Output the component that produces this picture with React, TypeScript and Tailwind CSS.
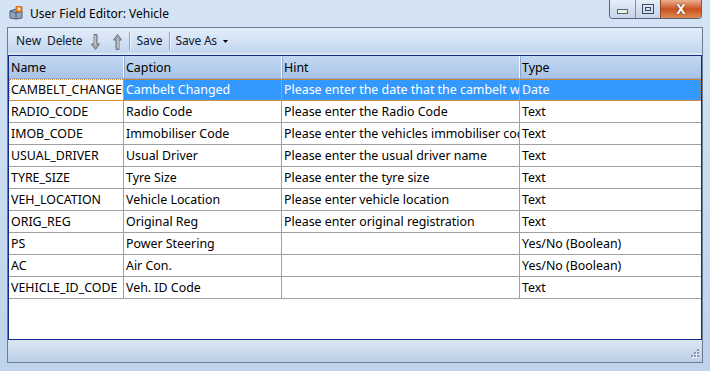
import React from "react";

type Row = { name: string; caption: string; hint: string; type: string };

const rows: Row[] = [
  { name: "CAMBELT_CHANGED", caption: "Cambelt Changed", hint: "Please enter the date that the cambelt was changed", type: "Date" },
  { name: "RADIO_CODE", caption: "Radio Code", hint: "Please enter the Radio Code", type: "Text" },
  { name: "IMOB_CODE", caption: "Immobiliser Code", hint: "Please enter the vehicles immobiliser code", type: "Text" },
  { name: "USUAL_DRIVER", caption: "Usual Driver", hint: "Please enter the usual driver name", type: "Text" },
  { name: "TYRE_SIZE", caption: "Tyre Size", hint: "Please enter the tyre size", type: "Text" },
  { name: "VEH_LOCATION", caption: "Vehicle Location", hint: "Please enter vehicle location", type: "Text" },
  { name: "ORIG_REG", caption: "Original Reg", hint: "Please enter original registration", type: "Text" },
  { name: "PS", caption: "Power Steering", hint: "", type: "Yes/No (Boolean)" },
  { name: "AC", caption: "Air Con.", hint: "", type: "Yes/No (Boolean)" },
  { name: "VEHICLE_ID_CODE", caption: "Veh. ID Code", hint: "", type: "Text" },
];

const cols = "grid grid-cols-[114px_158px_238px_1fr]";

function TitleIcon() {
  return (
    <svg width="14" height="14" viewBox="0 0 14 14">
      <path d="M1 5 L7 3 L13 5 L13 12 L7 13 L1 12 Z" fill="#8fa4bd" stroke="#4d5e74" strokeWidth="1" />
      <path d="M1 5 L7 7 L13 5" fill="none" stroke="#4d5e74" strokeWidth="1" />
      <path d="M7 7 L7 13" stroke="#4d5e74" strokeWidth="1" />
      <rect x="7" y="0" width="6" height="6" rx="1" fill="#f08a24" stroke="#b55a10" strokeWidth="0.8" />
      <path d="M10 1.5 V4.5 M8.5 3 H11.5" stroke="#fff" strokeWidth="1.2" />
    </svg>
  );
}

function Arrow({ up }: { up?: boolean }) {
  return (
    <svg width="9" height="16" viewBox="0 0 9 16" className={up ? "rotate-180" : ""}>
      <path d="M3 0.5 H6 V10 H8.5 L4.5 15.5 L0.5 10 H3 Z" fill="#a3a6a8" stroke="#6e7275" strokeWidth="1" />
      <path d="M4 1.5 V11" stroke="#d8dadb" strokeWidth="1" />
    </svg>
  );
}

function Sep() {
  return <div className="mx-[6px] h-[18px] w-px bg-[#8aa4c6] shadow-[1px_0_0_#eef4fb]" />;
}

export default function App() {
  return (
    <div
      className="flex h-[371px] w-[710px] flex-col overflow-hidden bg-gradient-to-b from-[#d5e4f5] to-[#bed2ea] text-[12px] text-black"
      style={{ fontFamily: '"Noto Sans", "Open Sans", sans-serif' }}
    >
      {/* title bar */}
      <div className="flex h-[27px] shrink-0 items-start">
        <div className="ml-[9px] mt-[6px]">
          <TitleIcon />
        </div>
        <div className="ml-[7px] mt-[6px] leading-[16px]">User Field Editor: Vehicle</div>
        <div className="ml-auto mr-[8px] flex h-[19px] overflow-hidden rounded-b-[4px] border border-t-0 border-[#55657c]">
          <div className="flex w-[25px] items-center justify-center bg-gradient-to-b from-[#e6eef8] to-[#c5d4e7]">
            <div className="mt-[5px] h-[5px] w-[11px] border border-[#56667a] bg-[#e9f5dc]" />
          </div>
          <div className="flex w-[25px] items-center justify-center border-l border-[#7f8ea2] bg-gradient-to-b from-[#e6eef8] to-[#c5d4e7]">
            <div className="flex h-[10px] w-[12px] items-center justify-center border border-[#3d4a5c]">
              <div className="h-[4px] w-[6px] border border-[#3d4a5c]" />
            </div>
          </div>
          <div className="flex w-[41px] items-center justify-center border-l border-[#8a4a2a] bg-gradient-to-b from-[#eab08e] via-[#c9501c] to-[#e08a52]">
            <span className="text-[14px] font-bold leading-none text-white [text-shadow:0_0_1px_#3a2010,0_0_1px_#3a2010]">X</span>
          </div>
        </div>
      </div>

      {/* client */}
      <div className="mx-[7px] flex flex-1 flex-col border border-[#6b7d95] bg-[#c9daf0]">
        {/* toolbar */}
        <div className="flex h-[25px] shrink-0 items-center bg-gradient-to-b from-[#e4eefa] via-[#d3e2f5] to-[#c2d6ee] pl-[8px] pt-[1px] text-[#0d1a33]">
          <span>New</span>
          <span className="ml-[6px] tracking-[-0.2px]">Delete</span>
          <span className="ml-[9px] mt-[1px]">
            <Arrow />
          </span>
          <span className="ml-[13px] mt-[1px]">
            <Arrow up />
          </span>
          <div className="ml-[1px]">
            <Sep />
          </div>
          <span>Save</span>
          <Sep />
          <span className="tracking-[-0.2px]">Save As</span>
          <svg width="5" height="3" viewBox="0 0 5 3" className="ml-[6px] mt-[1px]">
            <path d="M0 0 H5 L2.5 3 Z" fill="#000" />
          </svg>
        </div>
        <div className="h-[2px] shrink-0 bg-[#dfe9f6]" />

        {/* grid */}
        <div className="flex h-[285px] shrink-0 flex-col border border-[#0f2c86] bg-white text-[12.4px]">
          <div className={`${cols} h-[23px] shrink-0 bg-gradient-to-b from-[#c3d7f1] to-[#a9c4e8] border-b border-[#8fadd6]`}>
            {["Name", "Caption", "Hint", "Type"].map((h, i) => (
              <div
                key={h}
                className={`flex items-center pl-[2px] pt-[2px] ${i > 0 ? "border-l border-[#f4f8fd] shadow-[inset_1px_0_0_#8fa9cc]" : ""}`}
              >
                {h}
              </div>
            ))}
          </div>
          {rows.map((r, i) => {
            const sel = i === 0;
            return (
              <div
                key={r.name}
                className={`${cols} h-[22px] shrink-0 border-b border-[#a0a0a0] ${sel ? "outline-1 outline-dotted outline-[#d08a3c] -outline-offset-1" : ""}`}
              >
                {[r.name, r.caption, r.hint, r.type].map((c, j) => (
                  <div
                    key={j}
                    className={`flex items-center overflow-hidden whitespace-nowrap pl-[2px] pt-[2px] ${j > 0 ? "border-l border-[#a0a0a0]" : ""} ${sel && j > 0 ? "bg-[#3399ff] text-white" : ""}`}
                  >
                    {c}
                  </div>
                ))}
              </div>
            );
          })}
        </div>

        {/* status bar */}
        <div className="flex flex-1 items-end justify-end bg-gradient-to-b from-[#dbe6f4] to-[#bccee6] pb-[3px] pr-[3px]">
          <svg width="10" height="10" viewBox="0 0 10 10">
            {[
              [8, 0],
              [5, 3],
              [8, 3],
              [2, 6],
              [5, 6],
              [8, 6],
            ].map(([x, y], k) => (
              <g key={k}>
                <rect x={x + 1} y={y + 1} width="2" height="2" fill="#ffffff" />
                <rect x={x} y={y} width="2" height="2" fill="#8397b3" />
              </g>
            ))}
          </svg>
        </div>
      </div>
      <div className="h-[8px] shrink-0" />
    </div>
  );
}
